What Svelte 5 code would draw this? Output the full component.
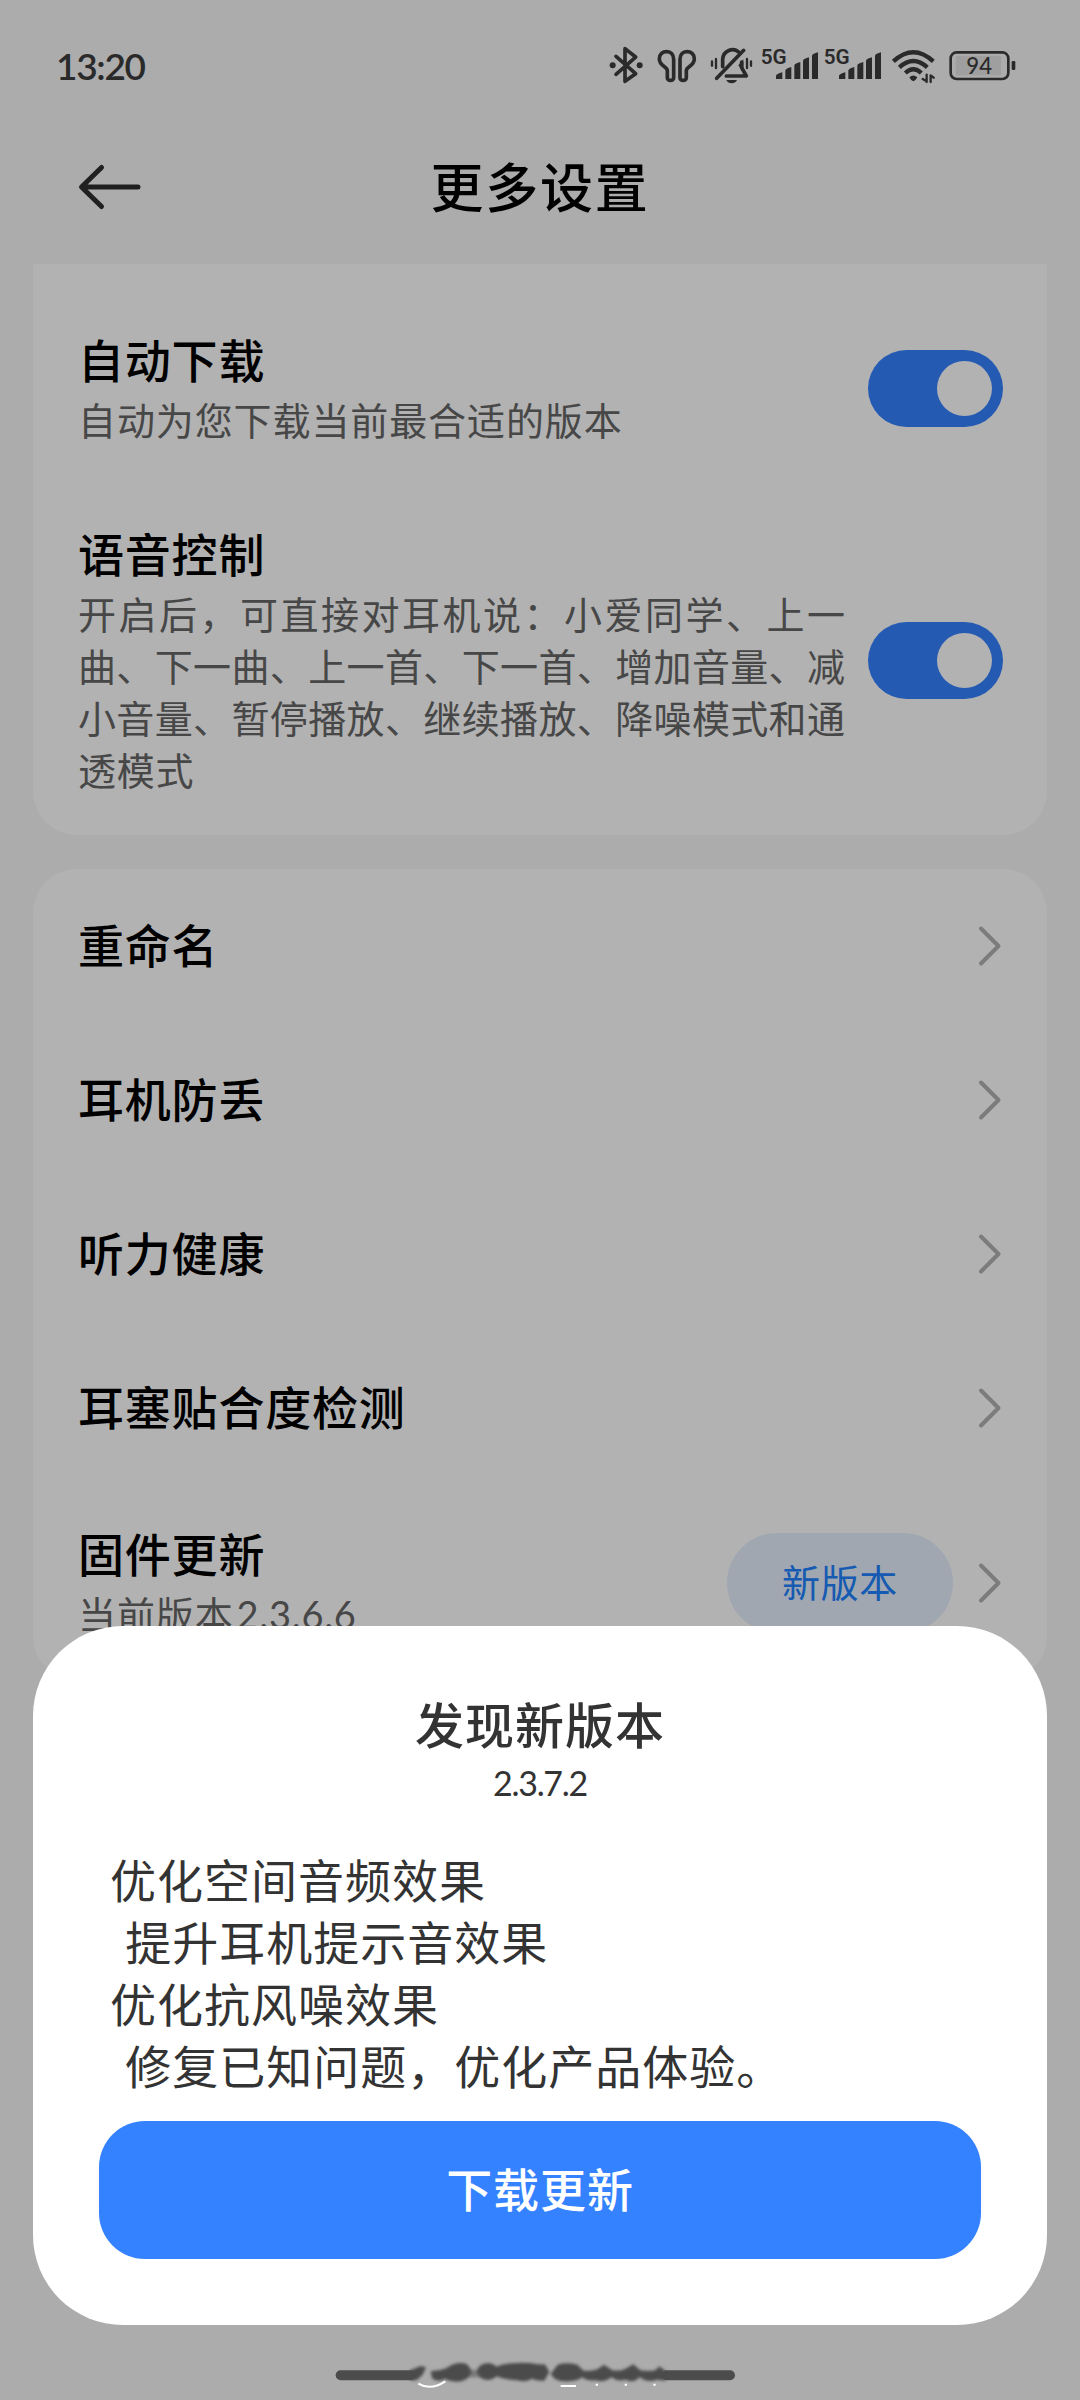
<script>
  let autoDownload = $state(true);
  let voiceControl = $state(true);

  const links = ["重命名", "耳机防丢", "听力健康", "耳塞贴合度检测"];

  const voiceLines = [
    "开启后，可直接对耳机说：小爱同学、上一",
    "曲、下一曲、上一首、下一首、增加音量、减",
    "小音量、暂停播放、继续播放、降噪模式和通",
    "透模式",
  ];

  const notes = [
    "优化空间音频效果",
    " 提升耳机提示音效果",
    "优化抗风噪效果",
    " 修复已知问题，优化产品体验。",
  ];
</script>

{#snippet chevron()}
  <svg class="chevron" viewBox="0 0 26 44" width="26" height="44">
    <path d="M4 4.500 L21.500 22 L4 39.500" />
  </svg>
{/snippet}

{#snippet signal()}
  <svg viewBox="530 45 190 120" width="63.333" height="40">
    <text class="net" x="541" y="102" textLength="78" lengthAdjust="spacingAndGlyphs">5G</text>
    <path
      d="M587 147 V137 Q588 132 606 127 V147 Z M615 147 V121 Q617 115 633 111 V147 Z M642 147 V106 Q644 100 660 96 V147 Z M668 147 V92 Q670 86 686 82 V147 Z M695 147 V77 Q697 71 713 67 V147 Z"
    />
  </svg>
{/snippet}

<div class="screen">
  <header class="status">
    <span class="clock">13:20</span>
    <div class="status-icons">
      <!-- bluetooth -->
      <svg viewBox="88 45 122 120" width="40.667" height="40">
        <path class="line" d="M109 79 L168 131 L136 154 V56 L168 81 L109 133" />
        <circle cx="99" cy="106" r="9" />
        <circle cx="180" cy="106" r="9" />
      </svg>
      <!-- earbuds -->
      <svg viewBox="210 45 160 120" width="53.333" height="40">
        <path
          class="line"
          d="M262 143 V122 C262 110 238 108 238 87 C238 72 248 65 260 65 C273 65 281 74 281 88 V143 C281 154 262 154 262 143 Z"
        />
        <path
          class="line"
          d="M319 143 V122 C319 110 343 108 343 87 C343 72 333 65 321 65 C308 65 300 74 300 88 V143 C300 154 319 154 319 143 Z"
        />
      </svg>
      <!-- muted bell -->
      <svg viewBox="370 45 160 120" width="53.333" height="40">
        <path class="line" d="M411 145 L492 61 M429 110 V88 C431 60 460 53 476 65" />
        <path class="line" d="M486 96 V113 L500 138 H440" />
        <path d="M491 88 V115 L496 134 L476 106 Z" />
        <path class="thin" d="M397 94 V107 M409 87 V114 M502 87 V114 M514 94 V107" />
        <path d="M440 150 H472 Q467 160 456 160 Q445 160 440 150 Z" />
      </svg>
      {@render signal()}
      {@render signal()}
      <!-- wifi -->
      <svg viewBox="910 45 176 120" width="58.667" height="40">
        <path class="wave" d="M941 94 Q1001 39 1061 94 M959 112 Q1001 74 1043 112 M977 129 Q1001 107 1025 129" />
        <path d="M989 142 Q1001 131 1013 142 Q1009 151 1001 154 Q993 151 989 142 Z" />
        <path class="tiny" d="M1041 134 V156 M1041 154 L1029 147 M1053 156 V136 L1062 143" />
      </svg>
      <!-- battery -->
      <svg viewBox="1086 45 230 120" width="76.667" height="40">
        <rect class="shell" x="1112" y="67" width="173" height="80" rx="18" />
        <rect class="charge" x="1127" y="77" width="136" height="59" rx="5" />
        <rect x="1295" y="93" width="11" height="27" rx="4" />
        <text class="level" x="1159" y="131" textLength="77" lengthAdjust="spacingAndGlyphs">94</text>
      </svg>
    </div>
  </header>

  <nav class="topbar">
    <svg class="back" viewBox="0 0 66 48" width="66" height="48">
      <path d="M25.500 4.500 L5.500 24 L25.500 43.500 M6 24 H62" />
    </svg>
    <h1>更多设置</h1>
  </nav>

  <section class="card first">
    <div class="row">
      <div class="text">
        <h2>自动下载</h2>
        <p>自动为您下载当前最合适的版本</p>
      </div>
      <button
        class="toggle"
        class:on={autoDownload}
        aria-label="自动下载"
        onclick={() => (autoDownload = !autoDownload)}
      ></button>
    </div>
    <div class="row">
      <div class="text">
        <h2>语音控制</h2>
        <p>
          {#each voiceLines as line}
            <span class="voice-line">{line}</span>
          {/each}
        </p>
      </div>
      <button
        class="toggle"
        class:on={voiceControl}
        aria-label="语音控制"
        onclick={() => (voiceControl = !voiceControl)}
      ></button>
    </div>
  </section>

  <section class="card">
    {#each links as link}
      <div class="row link">
        <h2>{link}</h2>
        {@render chevron()}
      </div>
    {/each}
    <div class="row">
      <div class="text">
        <h2>固件更新</h2>
        <p>当前版本<span class="number">2.3.6.6</span></p>
      </div>
      <span class="pill">新版本</span>
      {@render chevron()}
    </div>
  </section>

  <div class="mask">
    <div class="sheet">
      <h3>发现新版本</h3>
      <div class="version">2.3.7.2</div>
      <div class="notes">
        {#each notes as note}
          <div>{note}</div>
        {/each}
      </div>
      <button class="download">下载更新</button>
    </div>
    <!-- home indicator, smudged in the middle -->
    <svg class="home" viewBox="0 0 1380 180" width="460" height="60">
      <defs>
        <filter id="smudge" x="-10%" y="-50%" width="120%" height="200%">
          <feGaussianBlur stdDeviation="4" />
        </filter>
      </defs>
      <rect x="107" y="91" width="240" height="30" rx="15" />
      <rect x="1085" y="91" width="220" height="30" rx="15" />
      <g filter="url(#smudge)">
        <path d="M330 91 L362 78 L378 82 L368 104 L350 121 H330 Z" />
        <path d="M392 94 Q416 94 440 84 Q470 62 500 72 Q514 86 514 98 Q504 122 475 125 Q448 124 434 116 Q412 130 396 114 Z" />
        <path d="M531 94 Q535 70 565 69 Q583 72 590 80 Q620 66 690 69 Q710 74 735 73 L748 96 L733 122 Q710 124 696 116 Q676 128 652 121 Q615 120 591 109 Q572 125 550 118 Q534 112 531 94 Z" />
        <path d="M752 101 L773 74 Q800 66 832 74 L851 92 Q881 93 894 86 L912 74 L937 91 Q966 94 980 84 L1000 73 L1021 91 Q1050 94 1065 91 L1079 79 L1104 100 L1096 122 L1071 119 Q1040 130 1019 111 Q1000 132 978 119 Q952 126 934 112 Q910 130 887 121 Q862 124 847 112 Q831 126 790 124 Q762 122 752 101 Z" />
        <path class="faint" d="M500 89 H552 V112 H500 Z" />
      </g>
      <path class="mark" d="M355 131 Q392 153 436 124" />
      <path class="mark" d="M782 138 H828 M887 134 H894 M974 134 H981 M1060 134 H1067" />
    </svg>
  </div>
</div>

<style>
  :global(body) {
    margin: 0;
  }

  .screen {
    position: relative;
    width: 1080px;
    height: 2400px;
    overflow: hidden;
    background: #f7f7f7;
    color: #000;
    font-family: "Noto Sans CJK SC", sans-serif;
  }

  h1,
  h2,
  h3,
  p {
    margin: 0;
    font-weight: 500;
  }

  button {
    border: 0;
    padding: 0;
    font-family: inherit;
  }

  svg {
    display: block;
    flex: none;
  }

  .status {
    display: flex;
    justify-content: space-between;
    box-sizing: border-box;
    height: 110px;
    padding: 45px 61.300px 0 56px;
    color: #3d3d3d;
  }

  .clock {
    font: 600 37px/41px Lato, sans-serif;
    letter-spacing: -1.300px;
  }

  .status-icons {
    display: flex;
    fill: #3d3d3d;
  }

  .line,
  .thin,
  .wave,
  .tiny,
  .shell {
    fill: none;
    stroke: #3d3d3d;
    stroke-width: 11;
    stroke-linecap: round;
    stroke-linejoin: round;
  }

  .thin,
  .tiny {
    stroke-width: 7;
  }

  .wave {
    stroke-width: 13;
    stroke-linecap: butt;
  }

  .shell {
    stroke-width: 8;
  }

  .charge {
    fill: #e4e4e4;
  }

  .net {
    font: 600 58px Roboto, sans-serif;
  }

  .level {
    font: 500 69px Lato, sans-serif;
  }

  .topbar {
    display: grid;
    grid-template-columns: 78px 1fr 78px;
    align-items: center;
    height: 154px;
    padding: 0 76px;
  }

  .back {
    fill: none;
    stroke: #2e2e2e;
    stroke-width: 5;
    stroke-linecap: round;
    stroke-linejoin: round;
  }

  h1 {
    padding-bottom: 5px;
    font-size: 53px;
    letter-spacing: 1.800px;
    text-align: center;
  }

  .card {
    margin: 0 33px 34px;
    border-radius: 44px;
    background: #fff;
  }

  .card.first {
    padding-top: 27px;
    border-top-left-radius: 0;
    border-top-right-radius: 0;
  }

  .row {
    display: flex;
    align-items: center;
    padding: 40px 44px 40px 45px;
  }

  .row.link {
    justify-content: space-between;
    height: 154px;
    padding-block: 0;
  }

  .text {
    flex: 1;
  }

  h2 {
    padding-bottom: 5px;
    font-size: 46px;
    line-height: 55px;
    letter-spacing: 0.800px;
  }

  p {
    width: 767px;
    padding-top: 2px;
    color: #666;
    font-size: 38px;
    font-weight: 400;
    line-height: 52px;
    letter-spacing: 0.900px;
  }

  .voice-line {
    display: block;
    letter-spacing: 0;
    white-space: nowrap;
    text-align: justify;
    text-align-last: justify;
  }

  .voice-line:last-child {
    letter-spacing: 0.700px;
    text-align-last: left;
  }

  .number {
    margin-left: 3px;
    font-family: Lato, sans-serif;
    letter-spacing: 0.700px;
  }

  .toggle {
    flex: none;
    box-sizing: border-box;
    display: flex;
    width: 135px;
    height: 77px;
    padding: 11px;
    border-radius: 39px;
    background: #d9d9d9;
  }

  .toggle.on {
    justify-content: flex-end;
    background: #3482ff;
  }

  .toggle::after {
    content: "";
    width: 55px;
    height: 55px;
    border-radius: 50%;
    background: #fff;
  }

  .chevron {
    fill: none;
    stroke: #b2b2b2;
    stroke-width: 4;
    stroke-linecap: round;
    stroke-linejoin: round;
  }

  .row p:has(.number) {
    width: auto;
  }

  .pill {
    width: 226px;
    margin-right: 24px;
    padding-bottom: 5px;
    border-radius: 50px;
    background: #e5f0fe;
    color: #2082ff;
    font-size: 38px;
    line-height: 95px;
    letter-spacing: 0.700px;
    text-align: center;
  }

  .mask {
    position: absolute;
    inset: 0;
    display: flex;
    flex-direction: column;
    align-items: center;
    justify-content: flex-end;
    background: rgba(0, 0, 0, 0.3);
  }

  .sheet {
    box-sizing: border-box;
    width: 1014px;
    height: 699px;
    padding: 62px 66px 0;
    border-radius: 90px;
    background: #fff;
    color: #333;
  }

  h3 {
    padding-bottom: 3px;
    font-size: 49px;
    line-height: 70px;
    letter-spacing: 1px;
    text-align: center;
  }

  .version {
    font: 400 34px/43px Lato, sans-serif;
    letter-spacing: -1.300px;
    text-align: center;
  }

  .notes {
    margin: 43px 0 26px 11px;
    font-size: 46px;
    line-height: 62px;
    letter-spacing: 1px;
    word-spacing: 4px;
    white-space: pre;
  }

  .download {
    width: 882px;
    height: 138px;
    padding-bottom: 6px;
    border-radius: 46px;
    background: #3482ff;
    color: #fff;
    font-size: 46px;
    font-weight: 500;
    letter-spacing: 0.900px;
  }

  .home {
    margin: 15px 20px 0 0;
    fill: #4c4c4c;
  }

  .faint {
    opacity: 0.5;
  }

  .mark {
    fill: none;
    stroke: #fff;
    stroke-width: 6;
  }
</style>
